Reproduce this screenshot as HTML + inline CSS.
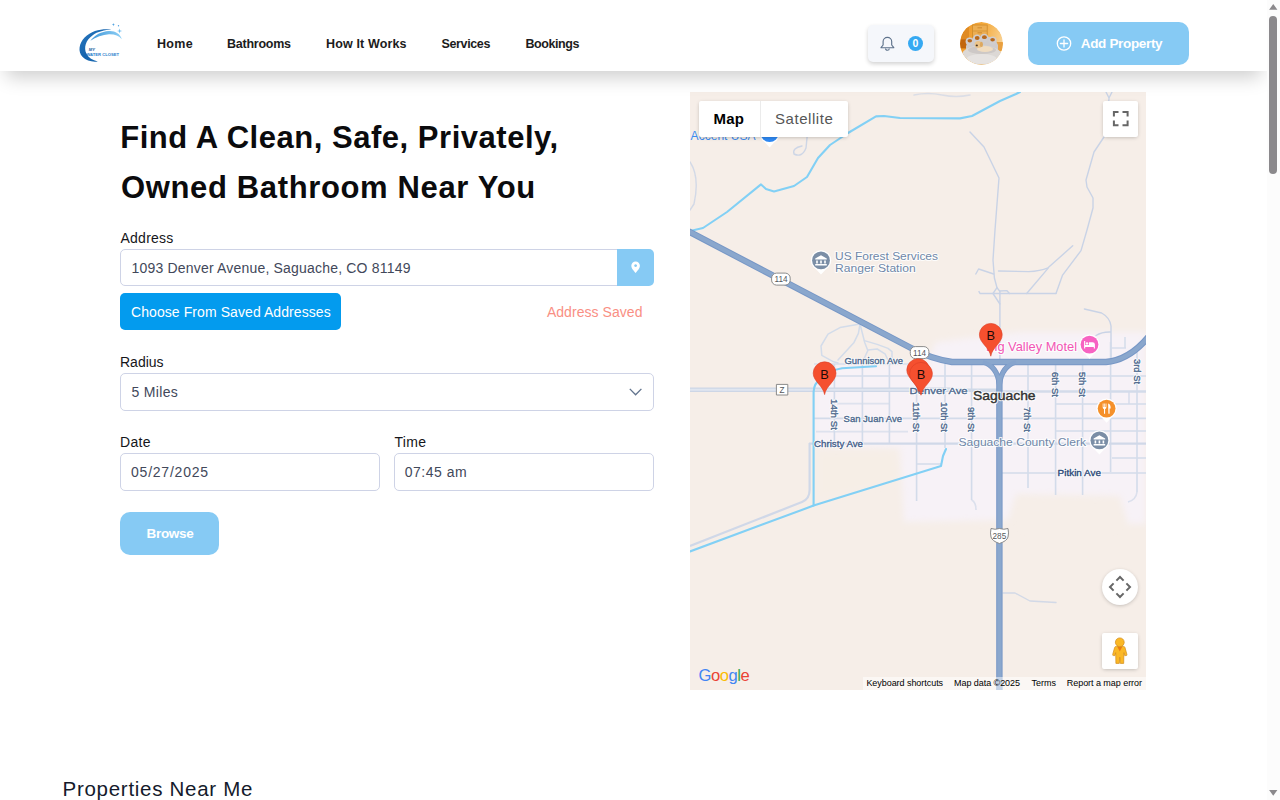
<!DOCTYPE html>
<html lang="en">
<head>
<meta charset="utf-8">
<title>My Water Closet</title>
<style>
*{box-sizing:border-box;margin:0;padding:0}
html,body{width:1280px;height:800px;overflow:hidden;background:#fff;font-family:"Liberation Sans",sans-serif;color:#111}
.abs{position:absolute}
#page{position:absolute;left:0;top:0;width:1267px;height:800px;overflow:hidden;background:#fff}
.t{position:absolute;line-height:1;white-space:nowrap;font-family:"Liberation Sans",sans-serif}
/* header */
#hdr{position:absolute;left:0;top:0;width:1267px;height:71px;background:#fff;box-shadow:0 12px 18px -6px rgba(0,0,0,.2);z-index:5}
#hdr .t{color:#1c1c20}
#bell{position:absolute;left:868px;top:25px;width:66px;height:37px;background:#f5f7fb;border-radius:5px;box-shadow:0 2px 4px rgba(0,0,0,.18)}
#badge{position:absolute;left:40px;top:11px;width:15px;height:15px;border-radius:50%;background:#36a9f2;color:#fff;font-size:10.5px;font-weight:700;text-align:center;line-height:15px}
#avatar{position:absolute;left:960px;top:22px;width:43px;height:43px;border-radius:50%;overflow:hidden}
#addp{position:absolute;left:1028px;top:22px;width:161px;height:43px;border-radius:10px;background:#86caf4}
#hdr #t_addp{color:#fff}
/* form */
.box{position:absolute;border:1px solid #ced3e6;border-radius:5px;background:#fff}
.lbl{color:#15161a}
.val{color:#42485a}
#locbtn{position:absolute;left:617px;top:249px;width:37px;height:37px;background:#86caf4;border-radius:0 5px 5px 0}
#saved{position:absolute;left:120px;top:293px;width:221px;height:37px;background:#039bee;border-radius:5px}
#t_choose{color:#fff}
#t_asv{color:#f98f84}
#browse{position:absolute;left:120px;top:512px;width:99px;height:43px;border-radius:10px;background:#86caf4}
#t_browse{color:#fff}
#t_h1a,#t_h1b{color:#0b0b0d}
#t_pnm{color:#141a2b}
/* map */
#map{position:absolute;left:690px;top:92px;width:456px;height:598px;background:#f6eee8;overflow:hidden}
/* scrollbar */
#sb{position:absolute;left:1267px;top:0;width:13px;height:800px;background:#fcfcfc}
#sbthumb{position:absolute;left:2.25px;top:16px;width:8px;height:158px;border-radius:4px;background:#8b898c}
/*TEXTCSS*/
#t_home{left:157px;top:37.7px;font-size:12.5px;font-weight:700;letter-spacing:0.33px}
#t_bath{left:227px;top:37.7px;font-size:12.5px;font-weight:700;letter-spacing:-0.25px}
#t_how{left:326px;top:37.7px;font-size:12.5px;font-weight:700;letter-spacing:0.14px}
#t_serv{left:441.5px;top:37.7px;font-size:12.5px;font-weight:700;letter-spacing:-0.36px}
#t_book{left:525.5px;top:37.7px;font-size:12.5px;font-weight:700;letter-spacing:-0.43px}
#t_h1a{left:120.2px;top:122.2px;font-size:31px;font-weight:700;letter-spacing:0.53px}
#t_h1b{left:121px;top:171.6px;font-size:31px;font-weight:700;letter-spacing:0.64px}
#t_laddr{left:120.5px;top:231.1px;font-size:14px;font-weight:400;letter-spacing:0.25px}
#t_iaddr{left:131.5px;top:260.6px;font-size:14px;font-weight:400;letter-spacing:0.19px}
#t_choose{left:131px;top:304.9px;font-size:14px;font-weight:400;letter-spacing:0.08px}
#t_asv{left:546.9px;top:304.6px;font-size:14px;font-weight:400;letter-spacing:0.05px}
#t_lrad{left:120px;top:355.1px;font-size:14px;font-weight:400;letter-spacing:0.0px}
#t_irad{left:131.5px;top:384.6px;font-size:14px;font-weight:400;letter-spacing:0.33px}
#t_ldate{left:120px;top:435.1px;font-size:14px;font-weight:400;letter-spacing:0.33px}
#t_idate{left:131px;top:464.9px;font-size:14px;font-weight:400;letter-spacing:0.78px}
#t_ltime{left:394.5px;top:435.1px;font-size:14px;font-weight:400;letter-spacing:0.33px}
#t_itime{left:404.8px;top:464.9px;font-size:14px;font-weight:400;letter-spacing:0.5px}
#t_browse{left:146.5px;top:526.6px;font-size:13.5px;font-weight:700;letter-spacing:-0.3px}
#t_addp{left:1080.8px;top:36.9px;font-size:13.5px;font-weight:700;letter-spacing:-0.34px}
#t_pnm{left:62.6px;top:778.8px;font-size:20.5px;font-weight:400;letter-spacing:0.71px}
</style>
</head>
<body>
<div id="page">
  <div id="hdr">
    <svg class="abs" style="left:76px;top:20px" width="50" height="46" viewBox="76 20 50 46">
  <defs>
    <linearGradient id="lg1" x1="0" y1="0" x2="1" y2="1"><stop offset="0" stop-color="#2a78c0"/><stop offset=".5" stop-color="#1664ad"/><stop offset="1" stop-color="#1c6db5"/></linearGradient>
    <linearGradient id="lg2" x1="0" y1="0" x2="1" y2="0"><stop offset="0" stop-color="#3f96d8"/><stop offset="1" stop-color="#8ed0f6"/></linearGradient>
  </defs>
  <path d="M111.6 29.6 C104 28.4 92 29.6 84.6 37.6 C79 43.6 77.6 51.6 82.4 56.8 C86.4 61 92.6 62.2 97.8 61.4 C92.6 60.6 88.6 58 86.4 53.6 C83.6 47.6 85.6 40.4 92.4 35.4 C97.6 31.6 104.6 30 111.6 29.6Z" fill="url(#lg1)"/>
  <path d="M90.4 40.8 C94.6 35 101.6 31.4 108.8 31 C115 30.6 120.2 33.6 121.8 39.2 C119 35.8 114.6 34 109 34.2 C102.4 34.6 96 36.8 90.4 40.8Z" fill="url(#lg2)"/>
  <path d="M119.6 28.4 L120.2 30.4 L122.2 31 L120.2 31.6 L119.6 33.6 L119 31.6 L117 31 L119 30.4Z" fill="#6fbef0"/>
  <path d="M113.4 23 L113.8 24.2 L115 24.6 L113.8 25 L113.4 26.2 L113 25 L111.8 24.6 L113 24.2Z" fill="#4a9fe0"/>
  <circle cx="118.5" cy="25.8" r=".7" fill="#4a9fe0"/>
  <text x="88.8" y="50.9" font-family="Liberation Sans, sans-serif" font-size="3.4" font-weight="700" font-style="italic" fill="#15579c" textLength="6.2" lengthAdjust="spacingAndGlyphs">MY</text>
  <text x="86.4" y="56" font-family="Liberation Sans, sans-serif" font-size="3.5" font-weight="700" fill="#2a80cc" textLength="32.6" lengthAdjust="spacingAndGlyphs">WATER CLOSET</text>
</svg>

    <div class="t" id="t_home">Home</div>
    <div class="t" id="t_bath">Bathrooms</div>
    <div class="t" id="t_how">How It Works</div>
    <div class="t" id="t_serv">Services</div>
    <div class="t" id="t_book">Bookings</div>
    <div id="bell"><div id="badge">0</div>
      <svg class="abs" style="left:0;top:0" width="66" height="37" viewBox="868 25 66 37"><path d="M881 47.7 L883.1 45 V41.6 a4.3 4.3 0 0 1 8.6 0 V45 L893.8 47.7Z" fill="none" stroke="#5e728b" stroke-width="1.15" stroke-linejoin="round"/><path d="M885.5 48.4 a1.9 1.9 0 0 0 3.8 0" fill="none" stroke="#5e728b" stroke-width="1.1"/></svg></div>
    <div id="avatar"><svg class="abs" style="left:0;top:0" width="43" height="43" viewBox="0 0 43 43">
  <defs>
    <linearGradient id="avbg" x1="0" y1="0" x2="1" y2=".3"><stop offset="0" stop-color="#eb9326"/><stop offset=".55" stop-color="#f4ab3e"/><stop offset="1" stop-color="#f8cf8e"/></linearGradient>
    <filter id="avb" x="-10%" y="-10%" width="120%" height="120%"><feGaussianBlur stdDeviation=".55"/></filter>
    <clipPath id="avc"><circle cx="21.5" cy="21.5" r="21.5"/></clipPath>
  </defs>
  <g clip-path="url(#avc)">
    <rect width="43" height="43" fill="url(#avbg)"/>
    <g filter="url(#avb)">
      <rect x="0" y="4" width="9" height="16" fill="#e08a22"/>
      <rect x="12.4" y="3" width="14.8" height="12" fill="#ecae52" stroke="#cf8a2a" stroke-width=".8"/>
      <path d="M13 9 H27" stroke="#cf8a2a" stroke-width=".6"/>
      <path d="M17.5 5.8 H22 M17.5 10.8 H22" stroke="#c88224" stroke-width=".8"/>
      <rect x="0" y="17.4" width="7" height="9" fill="#c2660f"/>
      <rect x="34" y="20" width="9" height="9" fill="#e9a040"/>
      <!-- back pad -->
      <path d="M6 24 Q8 18 14 17 Q21 14 29 15 Q36 17 38 23 L38 30 L6 30Z" fill="#cfcbcb"/>
      <!-- toes -->
      <circle cx="9.6" cy="19.6" r="4" fill="#d0cdce"/>
      <circle cx="17" cy="16.8" r="4.2" fill="#d0cdce"/>
      <circle cx="24.3" cy="15.9" r="4.2" fill="#d0cdce"/>
      <circle cx="32.6" cy="18.4" r="4" fill="#d0cdce"/>
      <ellipse cx="9.8" cy="18.8" rx="2.3" ry="1.8" fill="#b8691c"/>
      <ellipse cx="17.2" cy="16" rx="2.4" ry="1.9" fill="#b8691c"/>
      <ellipse cx="24.4" cy="15.2" rx="2.4" ry="1.9" fill="#b8691c"/>
      <ellipse cx="32.6" cy="17.8" rx="2.3" ry="1.8" fill="#b8691c"/>
      <!-- bed -->
      <ellipse cx="21.7" cy="33" rx="19.8" ry="9.6" fill="#dcd8d5"/>
      <ellipse cx="22" cy="28" rx="14" ry="4" fill="#cdc8c6"/>
      <ellipse cx="21.7" cy="37" rx="15" ry="5" fill="#e6e3e1"/>
      <!-- dog -->
      <ellipse cx="25" cy="27" rx="8" ry="3" fill="#f0dcc0"/>
      <ellipse cx="18.4" cy="22.4" rx="3.7" ry="3.5" fill="#ecc488"/>
      <ellipse cx="21.4" cy="22.4" rx="1.6" ry="2.6" fill="#dda85e"/>
      <ellipse cx="16.8" cy="23.4" rx="1.1" ry=".9" fill="#4a3424"/>
    </g>
  </g>
</svg>
</div>
    <div id="addp"><svg class="abs" style="left:0;top:0" width="161" height="43" viewBox="1028 22 161 43"><circle cx="1064" cy="43.5" r="6.7" fill="none" stroke="#fff" stroke-width="1.3"/><path d="M1060.4 43.5 H1067.6 M1064 39.9 V47.1" stroke="#fff" stroke-width="1.3" stroke-linecap="round"/></svg></div>
    <div class="t" id="t_addp">Add Property</div>
  </div>

  <div class="t" id="t_h1a">Find A Clean, Safe, Privately,</div>
  <div class="t" id="t_h1b">Owned Bathroom Near You</div>

  <div class="t lbl" id="t_laddr">Address</div>
  <div class="box" style="left:120px;top:249px;width:498px;height:37px;border-radius:5px 0 0 5px"></div>
  <div class="t val" id="t_iaddr">1093 Denver Avenue, Saguache, CO 81149</div>
  <div id="locbtn"><svg class="abs" style="left:0;top:0" width="37" height="37" viewBox="617 249 37 37"><path d="M635.6 261.4 a4.3 4.3 0 0 1 4.3 4.3 c0 3 -3.3 5.6 -4.3 7.4 c-1 -1.8 -4.3 -4.4 -4.3 -7.4 a4.3 4.3 0 0 1 4.3 -4.3Z M635.6 264.2 a1.4 1.4 0 1 0 .01 0Z" fill="#fff" fill-rule="evenodd"/></svg></div>
  <div id="saved"></div>
  <div class="t" id="t_choose">Choose From Saved Addresses</div>
  <div class="t" id="t_asv">Address Saved</div>

  <div class="t lbl" id="t_lrad">Radius</div>
  <div class="box" style="left:120px;top:373px;width:534px;height:38px"></div>
  <div class="t val" id="t_irad">5 Miles</div>
  <svg class="abs" style="left:626px;top:384px" width="20" height="16" viewBox="626 384 20 16"><path d="M629.8 388.9 L635.6 394.8 L641.4 388.9" fill="none" stroke="#62748e" stroke-width="1.35"/></svg>

  <div class="t lbl" id="t_ldate">Date</div>
  <div class="box" style="left:120px;top:453px;width:259.5px;height:37.5px"></div>
  <div class="t val" id="t_idate">05/27/2025</div>
  <div class="t lbl" id="t_ltime">Time</div>
  <div class="box" style="left:394px;top:453px;width:260px;height:37.5px"></div>
  <div class="t val" id="t_itime">07:45 am</div>

  <div id="browse"></div>
  <div class="t" id="t_browse">Browse</div>

  <div id="map">
<svg class="abs" style="left:0;top:0" width="456" height="598" viewBox="0 0 456 598" font-family="Liberation Sans, sans-serif">
  <defs>
    <filter id="bl6" x="-20%" y="-20%" width="140%" height="140%"><feGaussianBlur stdDeviation="3"/></filter>
    <filter id="bl2" x="-20%" y="-20%" width="140%" height="140%"><feGaussianBlur stdDeviation="1.2"/></filter>
    <g id="mk">
      <path d="M0 0 C-1.4 -9 -11.4 -13.2 -11.4 -21.4 A11.4 11.4 0 0 1 11.4 -21.4 C11.4 -13.2 1.4 -9 0 0Z" fill="#f5502f" stroke="#dc3f26" stroke-width=".6"/>
      <text x="0" y="-15.8" font-size="12.8" text-anchor="middle" fill="#1a0a08">B</text>
    </g>
  </defs>
  <rect width="456" height="598" fill="#f6eee8"/>

  <!-- urban shading -->
  <g filter="url(#bl6)" fill="#f7f2f7">
    <path d="M124 272 L236 272 L246 250 L330 240 L456 240 L456 432 L438 432 L430 404 L326 402 L318 428 L214 430 L210 356 L124 354Z"/>
  </g>
  <g filter="url(#bl6)" fill="#f6eee6">
    <path d="M130 362 L204 362 L206 388 L130 404Z"/>
    <path d="M336 410 L420 414 L424 436 L334 436Z" fill="#f6eee8"/>
  </g>

  <!-- faint rural roads -->
  <g fill="none" stroke="#c9d3e6" stroke-width="1.4" stroke-linecap="round" stroke-linejoin="round">
    <path d="M280 40 L294 55 L309 86 L305 138 L303 168 L304.4 186 L307 195.7 L309.9 199.4 L309.9 268"/>
    <path d="M416 0 L419 6 L422 0 M419 6 L418 20 L414 45 L404 60 L396 88 L397 95 L403 106 L403 116 L397 138 L391 158.6 L372.4 183.4 L366 201.5"/>
    <path d="M289 199.6 L290 201.5 L366 201.5"/>
    <path d="M308.5 179 L338.7 179.6 Q350 179 358 175.8 L382.7 153.8"/>
    <path d="M336.7 201.5 L358 176.4"/>
    <path d="M285.8 182 L288.6 177 L303.7 182"/>
    <path d="M303 201.5 L307 195.7 M303 201.5 L309.9 212 M309.9 199 L316.7 198.6 L319.5 201.5"/>
    <path d="M394.4 217 L411.6 221 Q420 225.6 421 234 L421 268 M406 243.5 Q412 239.6 421 240"/>
    <path d="M224 3 Q238 0 252 3 T280 3" stroke-opacity=".6"/>
    <path d="M0 70 Q10 85 4 112 L0 118" stroke-opacity=".8"/>
    <path d="M118 36 L116 56 Q112 66 104 62 Q102 56 112 54" stroke-opacity=".9"/>
    <path d="M313 501 L325 501 L340 509 L366 510.5" stroke-opacity=".8"/>
  </g>
  <!-- NW loop roads -->
  <g fill="none" stroke="#d3dcea" stroke-width="1.5" stroke-linecap="round" stroke-linejoin="round">
    <path d="M170 232 L150 235.6 L138 242.2 L131 254 L131.8 263.4 L143.6 269.8 L148 271"/>
    <path d="M170 232 L168.4 241.4 L163.8 250.8 L148 268"/>
    <path d="M170 232 L174.8 250.8 L177.8 258.6 L174.8 265 L172.4 271"/>
    <path d="M174.4 248.6 L187.2 252.4 L198 256.4 L202 259.6 L202 266"/>
    <path d="M177.8 258 L187.2 257 L195 261.8 L199.4 271"/>
  </g>

  <!-- streets -->
  <g fill="none" stroke="#d3dbea" stroke-width="1.6">
    <path d="M144.4 272 V350 M172.4 270 V351 M199.4 270 V351 M226.6 270 V409 M255 270 V356 M281.6 270 V408 M338 270 V396 M365.6 270 V403 M392.6 270 V403 M420.6 250 V380 M447 256 V400"/>
    <path d="M146 284 H456 M124 326.4 H456 M366 312 H456 M366 339 H456 M422 366 H456 M312 381 H456 M226.6 372 H252"/>
    <path d="M147 311.6 H200 M126 339.6 H218" stroke-opacity=".7"/>
    <path d="M281.6 408 Q286 410 286 418 M447 400 Q446 408 438 410" stroke-opacity=".8"/>
    <path d="M124 272 H236" stroke-opacity=".8"/>
    <path d="M421 256 H436 M435 245 V256" stroke-opacity=".9"/>
  </g>
  <g fill="none" stroke="#d0d8e8" stroke-width="2.2">
    <path d="M119 351.6 H456"/>
    <path d="M119.6 351 V398 Q119.6 407 112 410 L0 454"/>
  </g>
  <!-- Denver Ave / County Rd Z -->
  <path d="M0 297.8 H262" stroke="#cdd6e6" stroke-width="4.4" fill="none"/>
  <path d="M0 297.8 H262" stroke="#e0e6f0" stroke-width="2" fill="none"/>
  <path d="M262 298.2 H312" stroke="#d0d9e8" stroke-width="3.4" fill="none"/>
  <path d="M312 299.6 H456" stroke="#d3dbea" stroke-width="2.5" fill="none"/>
  <path d="M439 299.6 V312" stroke="#d3dbea" stroke-width="1.4" fill="none"/>

  <!-- creeks / canals -->
  <g fill="none" stroke="#82d0f5" stroke-width="2.1" stroke-linecap="round" stroke-linejoin="round">
    <path d="M0 139 L13 136 L37 120 L71 92.4 L76 97 L84 99.4 L104 94 L117 85 L128 66 L140 53 L158 41 L186 24.4 L194 24 L210 26 L270 26.4 L282 24 L310 9 L326 2 L330 0"/>
    <path d="M0 459.4 L123.6 413.6 L251 374 L253 364 L256 357"/>
    <path d="M123.6 413.6 V300 Q124 291 130 288 Q140 278 152 276.2 L186 274.2"/>
  </g>

  <!-- highways -->
  <g fill="none" stroke-linejoin="round">
    <path d="M-4 138 L221 256 Q240 266.6 262 270 L416 270 Q440 268 460 243" stroke="#7797c6" stroke-width="6.4"/>
    <path d="M293 270 Q307 274 309.4 292 Q312 274 326 270" stroke="#7797c6" stroke-width="5.4"/>
    <path d="M309.4 284 V600" stroke="#7797c6" stroke-width="6.4"/>
    <path d="M-4 138 L221 256 Q240 266.6 262 270 L416 270 Q440 268 460 243" stroke="#8aa7cd" stroke-width="4.4"/>
    <path d="M293 270 Q307 274 309.4 292 Q312 274 326 270" stroke="#86a4cd" stroke-width="3.8"/>
    <path d="M309.4 284 V600" stroke="#8aa7cd" stroke-width="4.4"/>
  </g>

  <!-- shields -->
  <g font-size="8.2" text-anchor="middle" fill="#55585c" font-weight="400" stroke-linejoin="round">
    <rect x="81.6" y="181.1" width="18.6" height="12" rx="5" fill="#fff" stroke="#8c8c8c" stroke-width="1"/>
    <text x="91" y="190">114</text>
    <rect x="220.3" y="254.6" width="18.6" height="12" rx="5" fill="#fff" stroke="#8c8c8c" stroke-width="1"/>
    <text x="229.6" y="263.6">114</text>
    <rect x="86.4" y="292.4" width="11.4" height="10.6" fill="#fff" stroke="#8a8a8a" stroke-width="1"/>
    <text x="92.1" y="300.7" font-weight="400">Z</text>
    <path d="M301 436.5 Q305 438 309.4 436.5 Q314 438 318 436.5 Q319 441 318 445 Q317 449 309.4 451.5 Q302 449 301 445 Q300 441 301 436.5Z" fill="#fff" stroke="#8a8a8a" stroke-width="1"/>
    <text x="309.4" y="447">285</text>
  </g>

  <!-- labels -->
  <g font-size="9.8" font-weight="400" stroke-linejoin="round">
    <text x="154.4" y="272.4" textLength="58.6" lengthAdjust="spacingAndGlyphs" fill="#4f6a8f" stroke="#fff" stroke-width="2.2" stroke-opacity=".85">Gunnison Ave</text>
    <text x="219.6" y="302.4" textLength="58" lengthAdjust="spacingAndGlyphs" fill="#4f6a8f" stroke="#fff" stroke-width="2.2" stroke-opacity=".85">Denver Ave</text>
    <text x="153.6" y="329.6" textLength="58.4" lengthAdjust="spacingAndGlyphs" fill="#4f6a8f" stroke="#fff" stroke-width="2.2" stroke-opacity=".85">San Juan Ave</text>
    <text x="124" y="355.2" textLength="49" lengthAdjust="spacingAndGlyphs" fill="#45608a" stroke="#fff" stroke-width="2.2" stroke-opacity=".85">Christy Ave</text>
    <text x="367.6" y="383.8" textLength="43.4" lengthAdjust="spacingAndGlyphs" fill="#2f4c7a" stroke="#fff" stroke-width="2.2" stroke-opacity=".85">Pitkin Ave</text>
    <text transform="translate(141 307) rotate(90)" textLength="31" lengthAdjust="spacingAndGlyphs" fill="#4f6a8f" stroke="#fff" stroke-width="2.2" stroke-opacity=".85">14th St</text>
    <text transform="translate(223.2 310) rotate(90)" textLength="30" lengthAdjust="spacingAndGlyphs" fill="#4f6a8f" stroke="#fff" stroke-width="2.2" stroke-opacity=".85">11th St</text>
    <text transform="translate(250.8 310) rotate(90)" textLength="30" lengthAdjust="spacingAndGlyphs" fill="#4f6a8f" stroke="#fff" stroke-width="2.2" stroke-opacity=".85">10th St</text>
    <text transform="translate(278.2 315) rotate(90)" textLength="25" lengthAdjust="spacingAndGlyphs" fill="#4f6a8f" stroke="#fff" stroke-width="2.2" stroke-opacity=".85">9th St</text>
    <text transform="translate(334 315) rotate(90)" textLength="25" lengthAdjust="spacingAndGlyphs" fill="#4f6a8f" stroke="#fff" stroke-width="2.2" stroke-opacity=".85">7th St</text>
    <text transform="translate(362.2 280) rotate(90)" textLength="25" lengthAdjust="spacingAndGlyphs" fill="#4f6a8f" stroke="#fff" stroke-width="2.2" stroke-opacity=".85">6th St</text>
    <text transform="translate(389.4 280) rotate(90)" textLength="25" lengthAdjust="spacingAndGlyphs" fill="#4f6a8f" stroke="#fff" stroke-width="2.2" stroke-opacity=".85">5th St</text>
    <text transform="translate(443.6 267) rotate(90)" textLength="25" lengthAdjust="spacingAndGlyphs" fill="#4f6a8f" stroke="#fff" stroke-width="2.2" stroke-opacity=".85">3rd St</text>
    <text x="154.4" y="272.4" textLength="58.6" lengthAdjust="spacingAndGlyphs" fill="#4f6a8f" stroke="#4f6a8f" stroke-width=".35">Gunnison Ave</text>
    <text x="219.6" y="302.4" textLength="58" lengthAdjust="spacingAndGlyphs" fill="#4f6a8f" stroke="#4f6a8f" stroke-width=".35">Denver Ave</text>
    <text x="153.6" y="329.6" textLength="58.4" lengthAdjust="spacingAndGlyphs" fill="#4f6a8f" stroke="#4f6a8f" stroke-width=".35">San Juan Ave</text>
    <text x="124" y="355.2" textLength="49" lengthAdjust="spacingAndGlyphs" fill="#45608a" stroke="#45608a" stroke-width=".35">Christy Ave</text>
    <text x="367.6" y="383.8" textLength="43.4" lengthAdjust="spacingAndGlyphs" fill="#2f4c7a" stroke="#2f4c7a" stroke-width=".35">Pitkin Ave</text>
    <text transform="translate(141 307) rotate(90)" textLength="31" lengthAdjust="spacingAndGlyphs" fill="#4f6a8f" stroke="#4f6a8f" stroke-width=".35">14th St</text>
    <text transform="translate(223.2 310) rotate(90)" textLength="30" lengthAdjust="spacingAndGlyphs" fill="#4f6a8f" stroke="#4f6a8f" stroke-width=".35">11th St</text>
    <text transform="translate(250.8 310) rotate(90)" textLength="30" lengthAdjust="spacingAndGlyphs" fill="#4f6a8f" stroke="#4f6a8f" stroke-width=".35">10th St</text>
    <text transform="translate(278.2 315) rotate(90)" textLength="25" lengthAdjust="spacingAndGlyphs" fill="#4f6a8f" stroke="#4f6a8f" stroke-width=".35">9th St</text>
    <text transform="translate(334 315) rotate(90)" textLength="25" lengthAdjust="spacingAndGlyphs" fill="#4f6a8f" stroke="#4f6a8f" stroke-width=".35">7th St</text>
    <text transform="translate(362.2 280) rotate(90)" textLength="25" lengthAdjust="spacingAndGlyphs" fill="#4f6a8f" stroke="#4f6a8f" stroke-width=".35">6th St</text>
    <text transform="translate(389.4 280) rotate(90)" textLength="25" lengthAdjust="spacingAndGlyphs" fill="#4f6a8f" stroke="#4f6a8f" stroke-width=".35">5th St</text>
    <text transform="translate(443.6 267) rotate(90)" textLength="25" lengthAdjust="spacingAndGlyphs" fill="#4f6a8f" stroke="#4f6a8f" stroke-width=".35">3rd St</text>
  </g>
  <text x="283" y="308" font-size="13.6" fill="#333" stroke="#fff" stroke-width="2.4" stroke-opacity=".9" textLength="62.6" lengthAdjust="spacingAndGlyphs">Saguache</text>
  <text x="283" y="308" font-size="13.6" fill="#333" stroke="#333" stroke-width=".4" textLength="62.6" lengthAdjust="spacingAndGlyphs">Saguache</text>
  <g font-size="11.6" fill="#6f87a8" stroke="#fff" stroke-width="2.2" paint-order="stroke" stroke-linejoin="round" stroke-opacity=".85">
    <text x="145" y="168" textLength="103" lengthAdjust="spacingAndGlyphs">US Forest Services</text>
    <text x="145" y="180.4" textLength="80.6" lengthAdjust="spacingAndGlyphs">Ranger Station</text>
    <text x="268.4" y="354" textLength="127.6" lengthAdjust="spacingAndGlyphs">Saguache County Clerk</text>
  </g>
  <text x="296" y="259" font-size="12.4" fill="#f255b4" stroke="#fff" stroke-width="2.2" paint-order="stroke" stroke-opacity=".85" textLength="91" lengthAdjust="spacingAndGlyphs">Big Valley Motel</text>
  <text x="0.6" y="47.6" font-size="12.6" fill="#3c8cf0" textLength="65" lengthAdjust="spacingAndGlyphs">Accent USA</text>

  <!-- POIs -->
  <g>
    <!-- accent usa (blue) -->
    <path d="M72 47 L79.6 55.4 L87.2 47Z" fill="#fff"/>
    <circle cx="79.6" cy="41.2" r="10.2" fill="#fff"/>
    <circle cx="79.6" cy="41.2" r="8.9" fill="#2f8af5"/>
    <!-- ranger station -->
    <path d="M123.4 174.4 L131.0 182.6 L138.6 174.4Z" fill="#fff"/>
    <circle cx="131" cy="168.4" r="10.2" fill="#fff"/>
    <circle cx="131" cy="168.4" r="8.9" fill="#7b8ea6"/>
    <g transform="translate(131 168.4)" fill="#fff"><path d="M-5.8 -1.8 L0 -5.2 L5.8 -1.8 V-.8 H-5.8Z M-4.8 0 H-3.2 V3 H-4.8Z M-.8 0 H.8 V3 H-.8Z M3.2 0 H4.8 V3 H3.2Z M-5.8 3.7 H5.8 V5 H-5.8Z"/></g>
    <!-- county clerk -->
    <path d="M401.8 354.4 L409.4 362.6 L417.0 354.4Z" fill="#fff"/>
    <circle cx="409.4" cy="348.4" r="10.2" fill="#fff"/>
    <circle cx="409.4" cy="348.4" r="8.9" fill="#7b8ea6"/>
    <g transform="translate(409.4 348.4)" fill="#fff"><path d="M-5.8 -1.8 L0 -5.2 L5.8 -1.8 V-.8 H-5.8Z M-4.8 0 H-3.2 V3 H-4.8Z M-.8 0 H.8 V3 H-.8Z M3.2 0 H4.8 V3 H3.2Z M-5.8 3.7 H5.8 V5 H-5.8Z"/></g>
    <!-- restaurant -->
    <path d="M409.0 322.6 L416.6 330.8 L424.2 322.6Z" fill="#fff"/>
    <circle cx="416.6" cy="316.6" r="10.2" fill="#fff"/>
    <circle cx="416.6" cy="316.6" r="8.9" fill="#f5902a"/>
    <g transform="translate(416.6 316.6)" fill="#fff"><path d="M-3.9 -5 V-1.3 Q-3.9 .2 -2.6 .5 V5.2 H-1.5 V.5 Q-.2 .2 -.2 -1.3 V-5 H-1 V-1.6 H-1.7 V-5 H-2.4 V-1.6 H-3.1 V-5Z M1.5 -5 Q4.1 -4.3 4.1 0 H3 V5.2 H1.8Z"/></g>
    <!-- motel -->
    <path d="M391.9 258.6 L399.5 266.8 L407.1 258.6Z" fill="#fff"/>
    <circle cx="399.5" cy="252.6" r="10.2" fill="#fff"/>
    <circle cx="399.5" cy="252.6" r="8.9" fill="#f763c2"/>
    <g transform="translate(399.5 252.6)" fill="#fff"><path d="M-5.4 -3.6 H-4.3 V.4 H-.6 V-2.4 H3 Q5.4 -2.4 5.4 0 V3.8 H4.3 V2.3 H-4.3 V3.8 H-5.4Z"/><circle cx="-2.5" cy="-1.2" r="1.2"/></g>
  </g>

  <!-- markers -->
  <use href="#mk" x="134.6" y="302.6"/>
  <use href="#mk" x="228.2" y="299.5"/>
  <use href="#mk" x="231" y="303.2"/>
  <use href="#mk" x="300.8" y="264.2"/>
</svg>
<!-- Map / Satellite control -->
<div class="abs" style="left:9px;top:9px;width:149px;height:36px;background:#fff;border-radius:2px;box-shadow:0 1px 4px -1px rgba(0,0,0,.3)"></div>
<div class="abs" style="left:69.5px;top:9px;width:1px;height:36px;background:#ebebeb"></div>
<div class="t" style="left:23.4px;top:18.9px;font-size:15px;font-weight:700;color:#000;letter-spacing:.3px">Map</div>
<div class="t" style="left:85px;top:18.9px;font-size:15px;color:#565656;letter-spacing:.55px">Satellite</div>
<!-- fullscreen -->
<div class="abs" style="left:412.5px;top:9px;width:35px;height:35.5px;background:#fff;border-radius:2px;box-shadow:0 1px 4px -1px rgba(0,0,0,.3)">
  <svg class="abs" style="left:0;top:0" width="35" height="35" viewBox="0 0 35 35"><path d="M10.9 15.5 V10.9 H15.5 M19.5 10.9 H24.6 V15.5 M24.6 19.6 V24.2 H19.5 M15.5 24.2 H10.9 V19.6" fill="none" stroke="#666" stroke-width="2"/></svg>
</div>
<!-- pan control -->
<div class="abs" style="left:412px;top:476.5px;width:36px;height:36px;border-radius:50%;background:#fff;box-shadow:0 1px 4px -1px rgba(0,0,0,.3)">
  <svg class="abs" style="left:0;top:0" width="36" height="36" viewBox="0 0 36 36"><path d="M14.4 11.6 L18 8 L21.6 11.6 M24.4 14.4 L28 18 L24.4 21.6 M21.6 24.4 L18 28 L14.4 24.4 M11.6 21.6 L8 18 L11.6 14.4" fill="none" stroke="#666" stroke-width="2"/></svg>
</div>
<!-- pegman -->
<div class="abs" style="left:412px;top:541px;width:36px;height:35.5px;background:#fff;border-radius:2px;box-shadow:0 1px 4px -1px rgba(0,0,0,.3)">
  <svg class="abs" style="left:0;top:0" width="36" height="36" viewBox="0 0 36 36">
    <path d="M14.2 13.4 H21.4 Q22.6 13.4 23 14.6 L24.9 21.4 Q25.1 22.6 24 22.6 L22.7 22.6 L21.9 19.6 L21.7 30.4 H18.3 L17.8 24.2 L17.3 30.4 H13.9 L13.7 19.6 L12.9 22.6 L11.6 22.6 Q10.5 22.6 10.7 21.4 L12.6 14.6 Q13 13.4 14.2 13.4Z" fill="#fbb825" stroke="#d18b1c" stroke-width=".7" stroke-linejoin="round"/>
    <path d="M15.2 13.6 L17.8 18.6 L20.4 13.6Z" fill="#ec7c13"/>
    <circle cx="17.8" cy="9.3" r="4.4" fill="#fbb825" stroke="#d18b1c" stroke-width=".7"/>
  </svg>
</div>
<!-- google logo -->
<div class="t" style="left:8.6px;top:576.4px;font-size:16.6px;letter-spacing:-.5px;font-weight:400"><span style="color:#4285f4">G</span><span style="color:#ea4335">o</span><span style="color:#fbbc05">o</span><span style="color:#4285f4">g</span><span style="color:#34a853">l</span><span style="color:#ea4335">e</span></div>
<!-- bottom attribution -->
<div class="abs" style="left:172.5px;top:585px;width:283.5px;height:13px;background:rgba(255,255,255,.5)"></div>
<div class="t" style="left:176.4px;top:586.6px;font-size:9px;color:#000;letter-spacing:-.05px">Keyboard shortcuts</div>
<div class="t" style="left:264px;top:586.6px;font-size:9px;color:#000;letter-spacing:-.05px">Map data ©2025</div>
<div class="t" style="left:341.6px;top:586.6px;font-size:9px;color:#000;letter-spacing:-.05px">Terms</div>
<div class="t" style="left:376.8px;top:586.6px;font-size:9px;color:#000;letter-spacing:-.05px">Report a map error</div>

</div>

  <div class="t" id="t_pnm">Properties Near Me</div>
</div>
<div id="sb"><div id="sbthumb"></div><svg class="abs" style="left:0;top:0" width="13" height="800" viewBox="0 0 13 800"><path d="M6.25 4 L10.4 9.8 H2.1Z M2.1 790 H10.4 L6.25 795.8Z" fill="#8b898c"/></svg></div>
</body>
</html>
